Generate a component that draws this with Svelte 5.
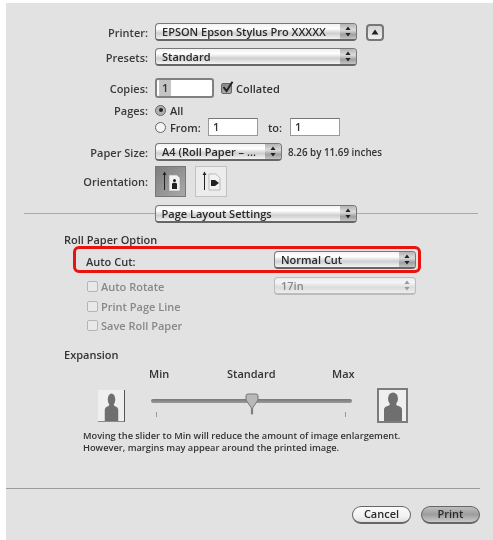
<script>
    const options = ["Auto Rotate", "Print Page Line", "Save Roll Paper"];
</script>

{#snippet popup(text, cls)}
    <div class="popup {cls}">
        <span class="popup-text">{text}</span>
        <span class="stepper">
            <svg width="6" height="11" viewBox="0 0 6 11"><path d="M3 0.5 L5.6 4 H0.4 Z M3 10.5 L5.6 7 H0.4 Z" /></svg>
        </span>
    </div>
{/snippet}

{#snippet person(w, h)}
    <svg class="person" width={w} height={h} viewBox="0 0 20 28" preserveAspectRatio="none">
        <ellipse cx="10" cy="6.5" rx="5" ry="6" />
        <path d="M1 28 V17 Q1 14 6 13 L7.5 11 H12.5 L14 13 Q19 14 19 17 V28 Z" />
    </svg>
{/snippet}

<div class="panel">
    <div class="row printer">
        <span class="label">Printer:</span>
        {@render popup("EPSON Epson Stylus Pro XXXXX", "wide")}
        <button class="disclosure" aria-label="Collapse">
            <svg width="8" height="6" viewBox="0 0 8 6"><path d="M4 0.5 L7.5 5.5 H0.5 Z" /></svg>
        </button>
    </div>
    <div class="row presets">
        <span class="label">Presets:</span>
        {@render popup("Standard", "wide")}
    </div>

    <div class="row copies">
        <span class="label">Copies:</span>
        <div class="field focused"><span class="sel">1</span></div>
        <span class="check on">
            <svg width="13" height="13" viewBox="0 0 13 13"><path d="M2.5 6 L5.5 10 L11.5 0.8" /></svg>
        </span>
        <span class="text">Collated</span>
    </div>
    <div class="row pages">
        <span class="label">Pages:</span>
        <span class="radio on"></span>
        <span class="text">All</span>
    </div>
    <div class="row from">
        <span class="label"></span>
        <span class="radio"></span>
        <span class="text from-label">From:</span>
        <div class="field small">1</div>
        <span class="text to-label">to:</span>
        <div class="field small">1</div>
    </div>
    <div class="row paper">
        <span class="label">Paper Size:</span>
        {@render popup("A4 (Roll Paper – ...", "paper-popup")}
        <span class="size-note">8.26 by 11.69 inches</span>
    </div>
    <div class="row orientation">
        <span class="label">Orientation:</span>
        <div class="orient active">
            <svg width="24" height="24" viewBox="0 0 24 24">
                <path class="arrow" d="M5 20 V5 L3.6 5 L5.5 1.5 L7.4 5 H6 V20 Z" />
                <path class="sheet" d="M10 5 H18 L21 8 V21 H10 Z" />
                <circle class="mark" cx="15.5" cy="10.5" r="1.5" />
                <path class="mark" d="M13 19 V14 Q13 12.8 15.5 12.8 Q18 12.8 18 14 V19 Z" />
            </svg>
        </div>
        <div class="orient">
            <svg width="24" height="24" viewBox="0 0 24 24">
                <path class="arrow" d="M5 20 V5 L3.6 5 L5.5 1.5 L7.4 5 H6 V20 Z" />
                <path class="sheet" d="M10 4 H17 L21 8 V20 H10 Z" />
                <path class="mark" d="M12 10 H16 L20 13 L16 16 H12 Z" />
            </svg>
        </div>
    </div>

    <div class="divider">
        {@render popup("Page Layout Settings", "wide")}
    </div>

    <div class="section">
        <h4>Roll Paper Option</h4>
        <div class="highlight">
            <span class="autocut-label">Auto Cut:</span>
            {@render popup("Normal Cut", "cut-popup")}
        </div>
        <div class="options">
            <div class="option-list">
                {#each options as label}
                    <div class="option">
                        <span class="check off"></span>
                        <span>{label}</span>
                    </div>
                {/each}
            </div>
            {@render popup("17in", "cut-popup disabled")}
        </div>

        <h4 class="expansion">Expansion</h4>
        <div class="scale-labels">
            <span>Min</span>
            <span>Standard</span>
            <span>Max</span>
        </div>
        <div class="slider-row">
            <div class="thumb-min">{@render person(15, 28)}</div>
            <div class="slider">
                <div class="track"></div>
                <svg class="knob" width="14" height="22" viewBox="0 0 14 22">
                    <path d="M1 3 Q1 1 3 1 H11 Q13 1 13 3 V7 L7.6 15 V21 H6.4 V15 L1 7 Z" />
                </svg>
                <i class="tick t1"></i>
                <i class="tick t2"></i>
            </div>
            <div class="thumb-max">{@render person(20, 29)}</div>
        </div>
        <p class="help">Moving the slider to Min will reduce the amount of image enlargement.<br />However, margins may appear around the printed image.</p>
    </div>

    <div class="footer">
        <button class="pill">Cancel</button>
        <button class="pill default">Print</button>
    </div>
</div>

<style>
    :global(body) {
        background: #fff;
    }

    .panel {
        margin: 3px 0 0 6px;
        height: 537px;
        padding-top: 20px;
        box-sizing: border-box;
        background: #e2e2e2;
        font-family: "Open Sans", sans-serif;
        font-size: 11px;
        font-weight: 600;
        color: #333;
        filter: blur(0.6px);
        overflow: hidden;
    }

    .row {
        display: flex;
        align-items: center;
    }

    .label {
        width: 142px;
        margin-right: 7px;
        text-align: right;
        flex: none;
        color: #3a3a3a;
    }

    .printer { height: 18px; }
    .presets { height: 18px; margin-top: 7px; }
    .copies { height: 20px; margin-top: 12px; }
    .pages { height: 12px; margin-top: 6px; }
    .from { height: 18px; margin-top: 2px; }
    .paper { height: 18px; margin-top: 7px; }
    .orientation { height: 31px; margin-top: 5px; }

    .popup {
        display: flex;
        align-items: center;
        justify-content: space-between;
        box-sizing: border-box;
        height: 18px;
        padding-left: 6px;
        border: 1px solid #777;
        border-bottom: 2px solid #666;
        border-radius: 4px;
        background: linear-gradient(#f2f2f2 0%, #fff 30%, #cfcfcf 62%, #f4f4f4 100%);
        overflow: hidden;
        flex: none;
    }

    .popup-text {
        white-space: nowrap;
        color: #2a2a2a;
    }

    .stepper {
        display: flex;
        align-items: center;
        justify-content: center;
        width: 16px;
        height: 100%;
        background: linear-gradient(#b4b4b4, #dcdcdc 40%, #a0a0a0 70%, #c4c4c4);
    }

    .stepper path {
        fill: #222;
    }

    .wide { width: 202px; }
    .paper-popup { width: 127px; }
    .cut-popup { width: 142px; }

    .disabled {
        border-color: #bbb;
        background: linear-gradient(#eee, #f4f4f4 30%, #dcdcdc 62%, #eee);
    }

    .disabled .popup-text {
        color: #888;
    }

    .disabled .stepper {
        background: none;
    }

    .disabled .stepper path {
        fill: #999;
    }

    .disclosure {
        display: flex;
        align-items: center;
        justify-content: center;
        box-sizing: border-box;
        width: 18px;
        height: 17px;
        margin-left: 9px;
        padding: 0;
        border: 2px solid #777;
        border-radius: 4px;
        background: linear-gradient(#d5d5d5, #eee);
    }

    .disclosure path {
        fill: #222;
    }

    .field {
        box-sizing: border-box;
        background: #fff;
        border: 1px solid #999;
        border-top-color: #777;
        line-height: 16px;
        padding-left: 4px;
        color: #333;
    }

    .focused {
        width: 59px;
        height: 20px;
        border: 2px solid #808080;
        border-radius: 3px;
        line-height: 16px;
        padding-left: 2px;
    }

    .sel {
        display: inline-block;
        padding: 0 3px;
        background: #c4c4c4;
    }

    .small {
        width: 50px;
        height: 18px;
    }

    .text {
        white-space: nowrap;
    }

    .check {
        box-sizing: border-box;
        display: block;
        flex: none;
        width: 11px;
        height: 11px;
        border-radius: 2px;
        position: relative;
    }

    .check.on {
        margin-left: 7px;
        margin-right: 4px;
        border: 1px solid #666;
        background: linear-gradient(#888, #aaa);
    }

    .check.on svg {
        position: absolute;
        left: -1px;
        top: -3px;
    }

    .check.on path {
        fill: none;
        stroke: #222;
        stroke-width: 2;
    }

    .check.off {
        border: 1px solid #b5b5b5;
        background: #e9e9e9;
    }

    .radio {
        box-sizing: border-box;
        display: block;
        flex: none;
        width: 11px;
        height: 11px;
        margin-right: 4px;
        border: 1px solid #666;
        border-radius: 50%;
        background: #f4f4f4;
        position: relative;
    }

    .radio.on {
        background: #b0b0b0;
    }

    .radio.on::after {
        content: "";
        position: absolute;
        left: 2.5px;
        top: 2.5px;
        width: 4px;
        height: 4px;
        border-radius: 50%;
        background: #222;
    }

    .from-label {
        width: 38px;
    }

    .to-label {
        width: 32px;
        padding-left: 10px;
        box-sizing: border-box;
    }

    .size-note {
        margin-left: 6px;
        font-size: 9.8px;
        white-space: nowrap;
    }

    .orient {
        box-sizing: border-box;
        display: flex;
        align-items: center;
        justify-content: center;
        width: 32px;
        height: 31px;
        margin-right: 9px;
        border: 1px solid #c2c2c2;
        background: #ececec;
    }

    .orient.active {
        width: 31px;
        background: linear-gradient(135deg, #7d7d7d, #a9a9a9);
        border-color: #777;
    }

    .orient .arrow { fill: #222; }
    .orient .sheet { fill: #f2f2f2; stroke: #999; stroke-width: 0.6; }
    .orient .mark { fill: #222; }

    .divider {
        display: flex;
        justify-content: center;
        position: relative;
        box-sizing: border-box;
        width: 454px;
        height: 18px;
        margin: 8px 0 0 18px;
        padding-left: 9px;
    }

    .divider::before {
        content: "";
        position: absolute;
        left: 0;
        right: 0;
        top: 8px;
        height: 1px;
        background: #a8a8a8;
    }

    .divider .popup {
        position: relative;
    }

    .section {
        padding-left: 58px;
    }

    h4 {
        margin: 0;
        font-size: 11px;
        font-weight: 600;
        line-height: 14px;
        color: #333;
    }

    .section > h4:first-child {
        margin-top: 10px;
    }

    .highlight {
        display: flex;
        align-items: center;
        justify-content: space-between;
        box-sizing: border-box;
        width: 348px;
        height: 27px;
        margin: -1px 0 0 9px;
        padding: 0 2px 0 10px;
        border: 3px solid #e8120f;
        border-radius: 6px;
        position: relative;
    }

    .autocut-label {
        position: relative;
        top: 2px;
    }

    .options {
        display: flex;
        justify-content: space-between;
        width: 352px;
        margin: 4px 0 0 0;
        padding-left: 23px;
        box-sizing: border-box;
    }

    .option {
        display: flex;
        align-items: center;
        gap: 3px;
        height: 19.5px;
        color: #888;
    }

    .expansion {
        margin-top: 12px;
    }

    .scale-labels {
        height: 14px;
        margin: 4px 0 0 0;
        display: grid;
        grid-template-columns: 78px 105px auto;
        padding-left: 85px;
        color: #333;
    }

    .slider-row {
        display: flex;
        align-items: flex-start;
        margin: 0 0 0 34px;
        padding-top: 8px;
    }

    .person ellipse, .person path {
        fill: #6f6f6f;
    }

    .thumb-min {
        box-sizing: border-box;
        display: flex;
        justify-content: center;
        align-items: flex-end;
        width: 27px;
        height: 32px;
        margin-top: 2px;
        background: #efefef;
        border-right: 1px solid #555;
        border-bottom: 1px solid #888;
    }

    .thumb-max {
        box-sizing: border-box;
        display: flex;
        justify-content: center;
        align-items: flex-end;
        width: 31px;
        height: 35px;
        margin-left: 25px;
        background: #efefef;
        border: 2px solid #7c7c7c;
    }

    .slider {
        position: relative;
        width: 201px;
        height: 34px;
        margin-left: 26px;
    }

    .track {
        position: absolute;
        left: 0;
        right: 0;
        top: 11px;
        height: 4px;
        border-radius: 2px;
        background: linear-gradient(#777, #9a9a9a);
    }

    .knob {
        position: absolute;
        left: 94px;
        top: 5px;
    }

    .knob path {
        fill: #b8b8b8;
        stroke: #777;
        stroke-width: 1;
    }

    .tick {
        position: absolute;
        top: 24px;
        width: 1px;
        height: 5px;
        background: #999;
    }

    .t1 { left: 5px; }
    .t2 { left: 194px; }

    .help {
        margin: 7px 0 0 19px;
        font-size: 9.25px;
        line-height: 12px;
        white-space: nowrap;
        color: #333;
    }

    .footer {
        display: flex;
        justify-content: flex-end;
        gap: 10px;
        box-sizing: border-box;
        width: 474px;
        height: 40px;
        margin-top: 34px;
        padding-top: 17px;
        border-top: 1px solid #9c9c9c;
    }

    .pill {
        box-sizing: border-box;
        width: 59px;
        height: 18px;
        padding: 0;
        border: 1px solid #666;
        border-bottom-width: 2px;
        border-radius: 9px;
        background: linear-gradient(#fafafa, #f2f2f2 60%, #e2e2e2);
        font: inherit;
        line-height: 14px;
        color: #2a2a2a;
    }

    .pill.default {
        background: linear-gradient(#bdbdbd, #9d9d9d 50%, #c9c9c9);
    }
</style>
